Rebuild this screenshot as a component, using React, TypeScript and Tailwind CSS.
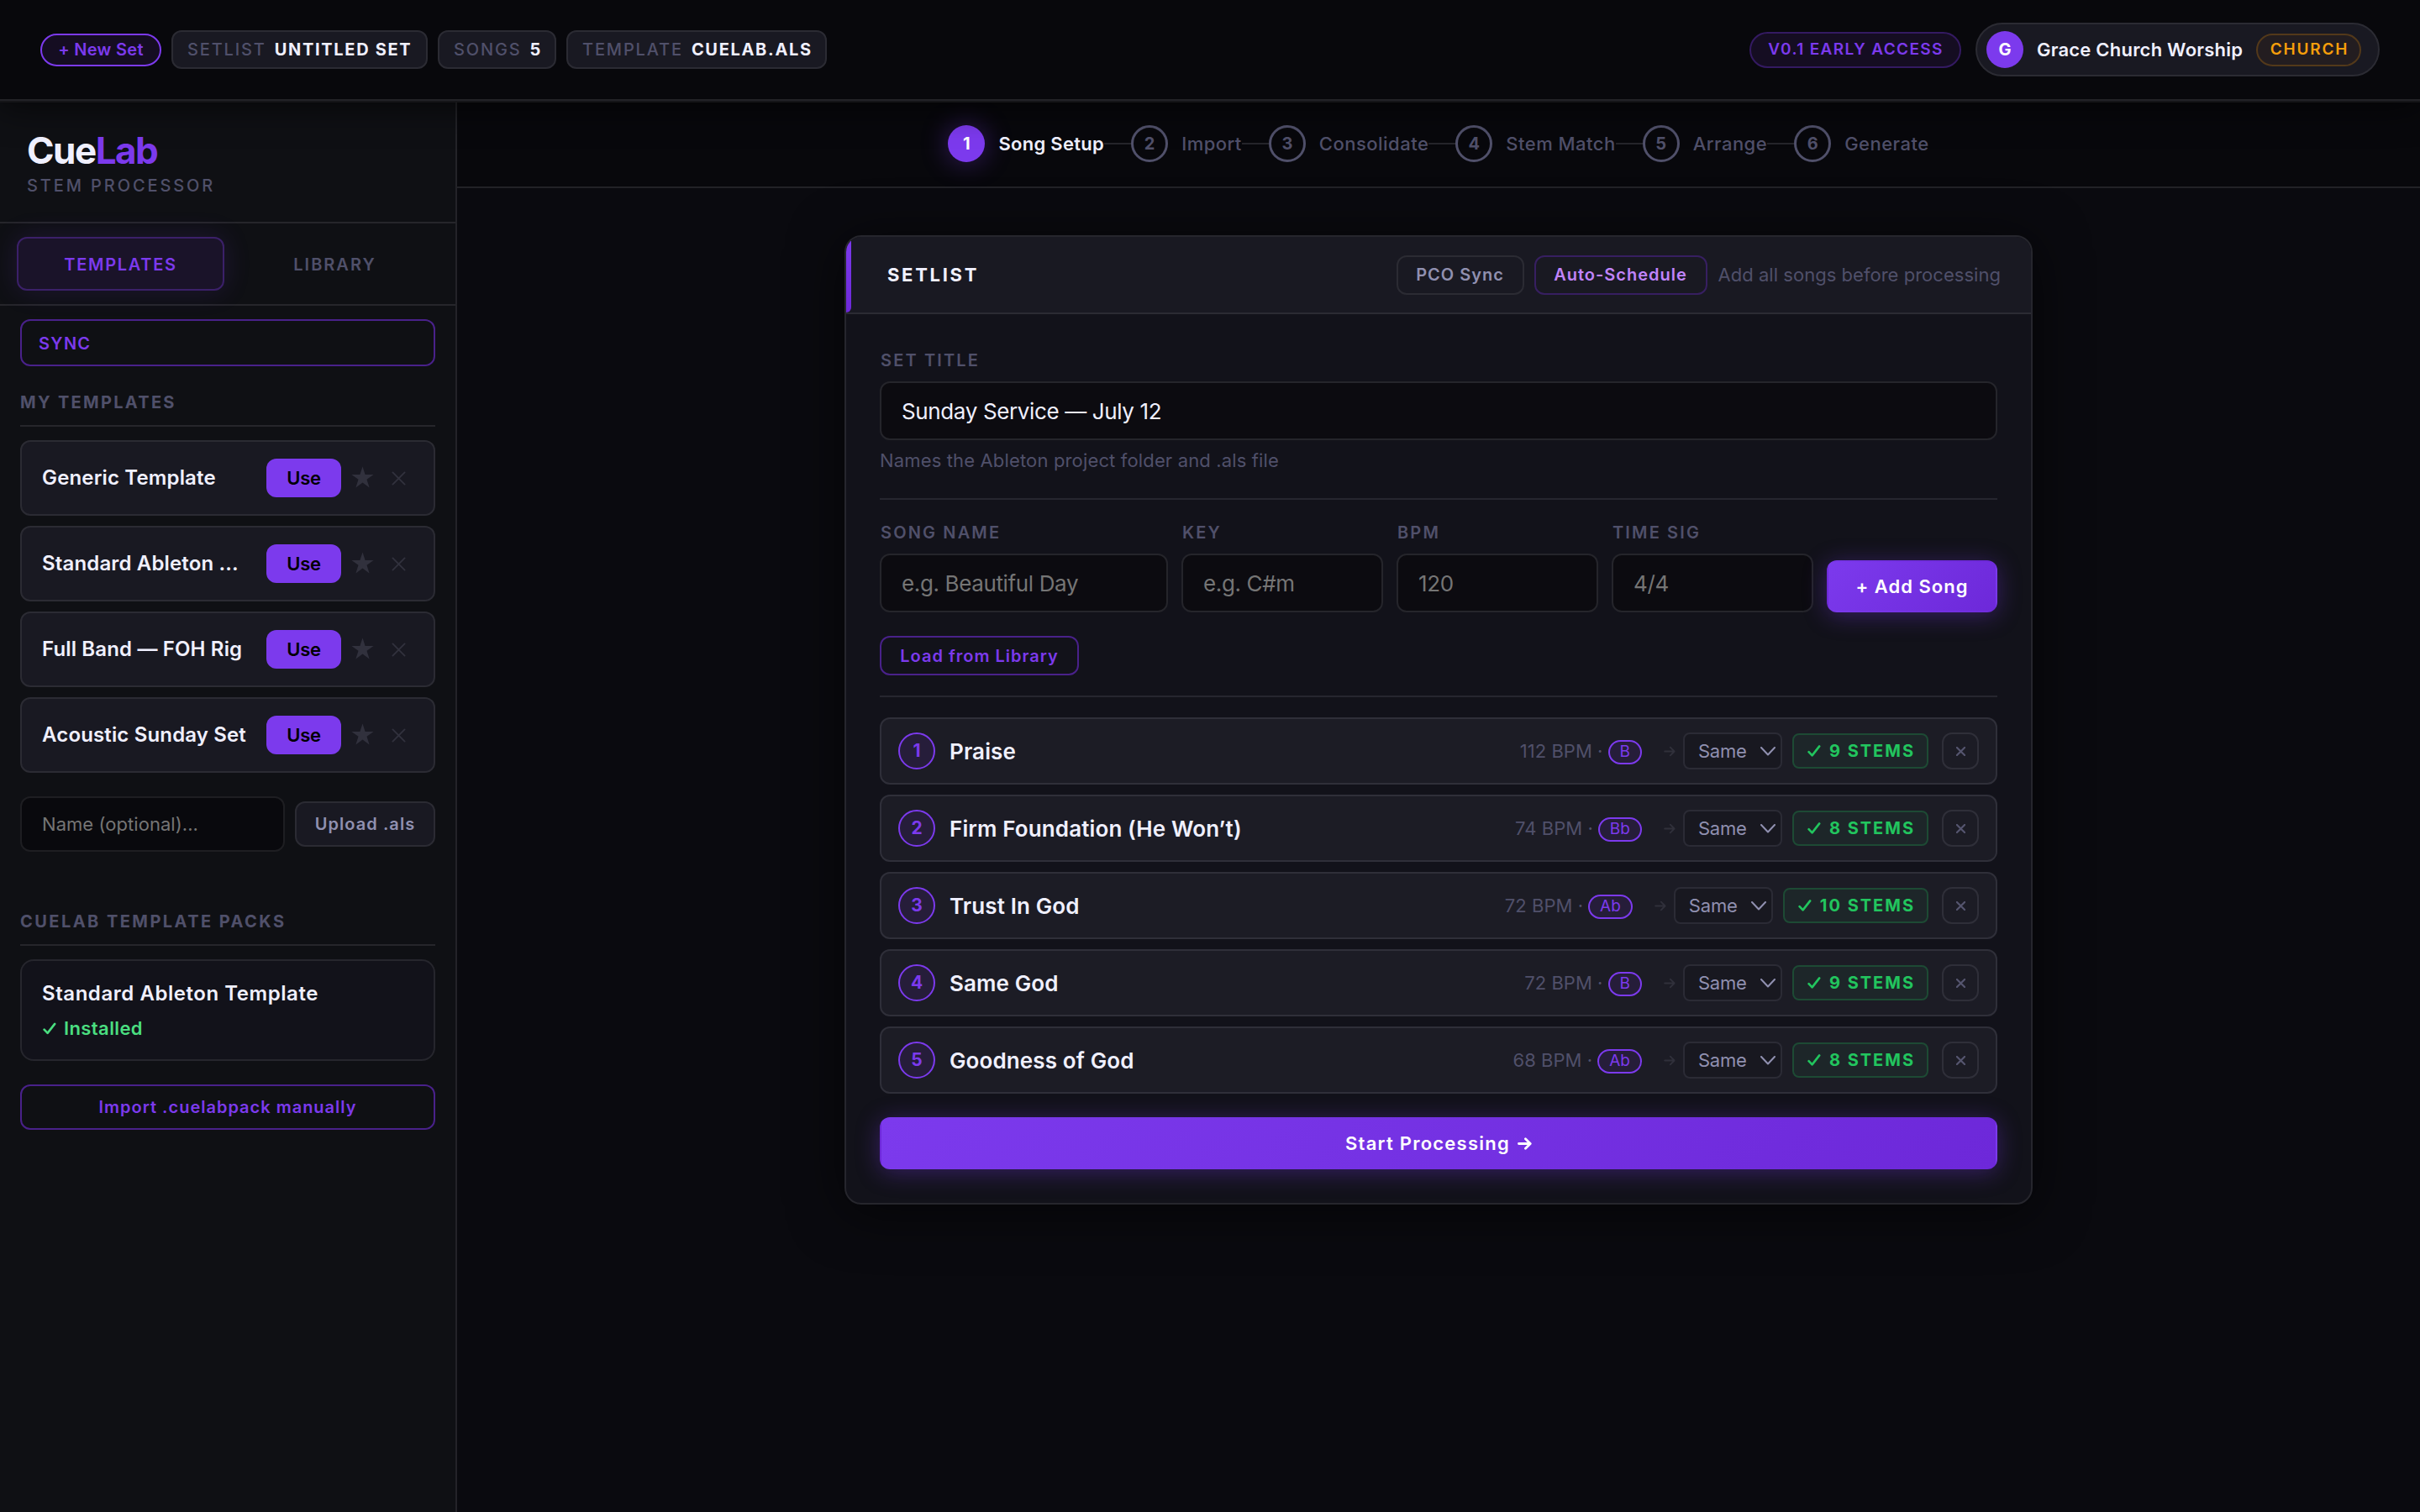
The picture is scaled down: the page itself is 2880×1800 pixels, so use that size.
import { Fragment, ReactNode } from "react";

const templates = ["Generic Template", "Standard Ableton ...", "Full Band — FOH Rig", "Acoustic Sunday Set"];

const steps = ["Song Setup", "Import", "Consolidate", "Stem Match", "Arrange", "Generate"];

const songs = [
  { title: "Praise", bpm: 112, songKey: "B", stems: 9 },
  { title: "Firm Foundation (He Won’t)", bpm: 74, songKey: "Bb", stems: 8 },
  { title: "Trust In God", bpm: 72, songKey: "Ab", stems: 10 },
  { title: "Same God", bpm: 72, songKey: "B", stems: 9 },
  { title: "Goodness of God", bpm: 68, songKey: "Ab", stems: 8 },
];

const inputClasses =
  "w-full h-[70px] rounded-xl border-2 border-[#25252b] bg-[#0c0b10] px-6 text-[26px] tracking-[-0.37px] text-[#f0f0ff] placeholder-[#757575] outline-none";

const labelClasses = "block pl-px text-[20px] leading-[28px] font-semibold tracking-[2.15px] text-[#50506a]";

const primaryClasses =
  "flex items-center justify-center h-[62px] rounded-xl border-2 border-transparent bg-linear-135 from-[#7c3aed] to-[#6d28d9] text-[22px] font-semibold text-white shadow-[0_4px_28px_rgba(124,58,237,0.35)]";

function Check({ className }: { className?: string }) {
  return (
    <svg viewBox="0 0 16 14" className={className} fill="none" stroke="currentColor" strokeWidth="2.6" strokeLinecap="round" strokeLinejoin="round">
      <path d="M1.6 8.2 5.6 12.4 14.2 1.4" />
    </svg>
  );
}

function Cross({ className, width }: { className?: string; width: number }) {
  return (
    <svg viewBox="0 0 18 18" className={className} fill="none" stroke="currentColor" strokeWidth={width} strokeLinecap="round">
      <path d="M1.5 1.5 16.5 16.5M16.5 1.5 1.5 16.5" />
    </svg>
  );
}

function Arrow({ className, width }: { className?: string; width: number }) {
  return (
    <svg viewBox="0 0 18 16" className={className} fill="none" stroke="currentColor" strokeWidth={width} strokeLinecap="round" strokeLinejoin="round">
      <path d="M1.5 8H16M10 1.8 16.2 8 10 14.2" />
    </svg>
  );
}

function Stat({ label, value, className }: { label: string; value: string; className: string }) {
  return (
    <div className={`flex h-[46px] items-center gap-[10px] rounded-xl border-2 border-[#2b2b33] bg-[#191922] pl-[17px] text-[20px] whitespace-nowrap ${className}`}>
      <span className="font-medium tracking-[1.85px] text-[#50506a]">{label}</span>
      <span className="font-bold tracking-[1.68px] text-[#f0f0ff]">{value}</span>
    </div>
  );
}

function Header() {
  return (
    <header className="relative z-10 flex h-[120px] shrink-0 items-center justify-between border-b-2 border-[#222227] bg-[#08080c] px-12 shadow-[0_2px_0_#151518,0_8px_40px_rgba(0,0,0,0.6)]">
      <div className="flex items-center gap-3">
        <button className="h-[39px] w-[144px] rounded-full border-2 border-[#7c3aed] bg-[#150d22] text-[20px] font-semibold tracking-[0.3px] text-[#7c3aed]">
          + New Set
        </button>
        <Stat label="SETLIST" value="UNTITLED SET" className="w-[305px]" />
        <Stat label="SONGS" value="5" className="w-[141px]" />
        <Stat label="TEMPLATE" value="CUELAB.ALS" className="w-[310px]" />
      </div>
      <div className="flex items-center gap-[17px]">
        <span className="flex h-[43px] w-[252px] items-center justify-center rounded-full border-2 border-[#341a62] bg-[#150d22] pl-px text-[19px] font-semibold tracking-[1.35px] text-[#7c3aed]">
          V0.1 EARLY ACCESS
        </span>
        <div className="flex h-16 w-[481px] items-center rounded-full border-2 border-[#2b2b33] bg-[#191922] pr-5 pl-[11px]">
          <span className="flex h-11 w-11 items-center justify-center rounded-full bg-[#7c3aed] text-[20px] font-bold text-white">G</span>
          <span className="ml-[16px] flex-1 text-[22px] font-semibold tracking-[0.22px] whitespace-nowrap text-[#f0f0ff]">Grace Church Worship</span>
          <span className="flex h-[39px] w-[125px] items-center justify-center rounded-full border-2 border-[#53391a] bg-[#231d20] pl-[2px] text-[19px] font-semibold tracking-[1.8px] text-[#f59e0b]">
            CHURCH
          </span>
        </div>
      </div>
    </header>
  );
}

function SectionTitle({ children, className }: { children: ReactNode; className: string }) {
  return (
    <h2 className={`border-b-2 border-[#26262b] pb-3 text-[20px] leading-[30px] font-bold text-[#50506a] ${className}`}>{children}</h2>
  );
}

function Sidebar() {
  return (
    <aside className="flex w-[544px] shrink-0 flex-col border-r-2 border-[#232328] bg-[#0f1014]">
      <div className="h-[146px] border-b-2 border-[#26262b] pt-[33px] pl-8">
        <h1 className="text-[44px] leading-[52px] font-bold tracking-[-1.5px] text-[#f0f0ff]">
          Cue<span className="text-[#7c3aed]">Lab</span>
        </h1>
        <p className="mt-px text-[20px] leading-[30px] font-medium tracking-[2.9px] text-[#50506a]">STEM PROCESSOR</p>
      </div>

      <div className="flex h-[98px] gap-2 border-b-2 border-[#26262b] px-5 py-4 text-[20px] font-semibold">
        <button className="flex-1 rounded-xl border-2 border-[#3b2069] bg-[#1a1329] pt-[2px] tracking-[1.7px] text-[#7c3aed] shadow-[0_0_32px_rgba(124,58,237,0.15)]">
          TEMPLATES
        </button>
        <button className="flex-1 border-2 border-transparent pt-[2px] tracking-[2px] text-[#50506a]">LIBRARY</button>
      </div>

      <div className="flex flex-col px-6 pt-4">
        <button className="h-14 rounded-xl border-2 border-[#49218a] pt-[2px] pl-5 text-left text-[20px] font-semibold tracking-[1.3px] text-[#7c3aed]">
          SYNC
        </button>

        <SectionTitle className="mt-7 tracking-[2.3px]">MY TEMPLATES</SectionTitle>
        <ul className="mt-4 flex flex-col gap-3">
          {templates.map((name) => (
            <li key={name} className="flex h-[90px] items-center rounded-xl border-2 border-[#2b2b33] bg-[#191922] pr-[33px] pl-6">
              <span className="flex-1 text-[24px] font-semibold tracking-[0.15px] whitespace-nowrap text-[#f0f0ff]">{name}</span>
              <button className="h-[46px] w-[89px] rounded-xl bg-[#7c3aed] text-[22px] font-semibold tracking-[-0.3px] text-black">Use</button>
              <svg viewBox="0 0 27 26" className="ml-3 h-[26px] w-[27px] -translate-y-px fill-[#31313d]">
                <path d="M13.5.4 16.6 10H26.6L18.5 15.8 21.6 25.4 13.5 19.5 5.4 25.4 8.5 15.8.4 10H10.4Z" />
              </svg>
              <Cross className="ml-[21px] h-[17px] w-[17px] text-[#31313d]" width={2} />
            </li>
          ))}
        </ul>

        <div className="mt-7 flex items-center gap-3">
          <input
            placeholder="Name (optional)..."
            className="h-[66px] w-[315px] rounded-xl border-2 border-[#1e1e22] bg-[#09090d] pl-6 text-[22px] tracking-[0.05px] placeholder-[#757575] outline-none"
          />
          <button className="h-[54px] flex-1 rounded-xl border-2 border-[#2b2b33] bg-[#191922] text-[20px] font-semibold tracking-[1.05px] whitespace-nowrap text-[#9090b0]">
            Upload .als
          </button>
        </div>

        <SectionTitle className="mt-[68px] tracking-[2.45px]">CUELAB TEMPLATE PACKS</SectionTitle>
        <div className="mt-4 h-[121px] rounded-2xl border-2 border-[#26262d] bg-[#12121a] pt-[24px] pl-6">
          <p className="text-[24px] leading-[30px] font-semibold tracking-[0.55px] text-[#f0f0ff]">Standard Ableton Template</p>
          <p className="mt-[11px] flex items-center gap-[9px] text-[22px] leading-[30px] font-semibold tracking-[0.4px] text-[#4ade80]">
            <Check className="ml-px h-[15px] w-[16px]" /> Installed
          </p>
        </div>
        <button className="mt-7 h-[54px] rounded-xl border-2 border-[#49218a] text-[20px] font-semibold tracking-[1px] text-[#7c3aed]">
          Import .cuelabpack manually
        </button>
      </div>
    </aside>
  );
}

function Stepper() {
  return (
    <nav className="flex h-[104px] shrink-0 items-center justify-center border-b-2 border-[#222227] bg-[#08080c]">
      {steps.map((step, i) => (
        <Fragment key={step}>
          {i > 0 && <span className="h-[2px] w-8 bg-[#25252b]" />}
          <span
            className={
              i === 0
                ? "flex h-11 w-11 items-center justify-center rounded-full bg-[#7c3aed] text-[20px] font-bold text-white shadow-[0_0_32px_rgba(124,58,237,0.4)]"
                : "flex h-11 w-11 items-center justify-center rounded-full border-3 border-[#50506a] text-[20px] font-bold text-[#50506a]"
            }
          >
            {i + 1}
          </span>
          <span className={`ml-4 text-[22px] ${i === 0 ? "font-semibold tracking-[0.3px] text-[#f0f0ff]" : "font-medium tracking-[0.48px] text-[#50506a]"}`}>
            {step}
          </span>
        </Fragment>
      ))}
    </nav>
  );
}

function SongRow({ song, index }: { song: (typeof songs)[number]; index: number }) {
  return (
    <li className="flex h-20 items-center rounded-xl border-2 border-[#2f2f39] bg-[#1c1c25] px-5">
      <span className="flex h-11 w-11 items-center justify-center rounded-full border-2 border-[#7c3aed] bg-[#261d3a] text-[21px] font-bold text-[#7c3aed]">
        {index}
      </span>
      <span className="ml-[17px] flex-1 text-[26px] font-semibold tracking-[0.12px] text-[#f0f0ff]">{song.title}</span>
      <span className="text-[22px] tracking-[0.05px] text-[#50506a]">{song.bpm} BPM ·</span>
      <span className="ml-[6px] flex h-[29px] translate-y-px items-center rounded-full border-2 border-[#7c3aed] bg-[#261d3a] px-3 text-[19px] text-[#7c3aed]">
        {song.songKey}
      </span>
      <Arrow className="ml-[26px] h-[13px] w-[14px] text-[#30303b]" width={2.4} />
      <div className="ml-[9px] flex h-11 w-[118px] items-center justify-between rounded-lg border-2 border-[#2b2b35] bg-[#181820] pr-[6px] pl-4 text-[22px] tracking-[-0.2px] text-[#9090b0]">
        Same
        <svg viewBox="0 0 18 11" className="h-[11px] w-[18px]" fill="none" stroke="currentColor" strokeWidth="2" strokeLinecap="round" strokeLinejoin="round">
          <path d="M1 1 9 9.5 17 1" />
        </svg>
      </div>
      <span className="ml-3 flex h-[42px] items-center gap-[10px] rounded-lg border-2 border-[#1d4a34] bg-[#1d2629] pr-[14px] pl-4 text-[20px] font-bold tracking-[2px] whitespace-nowrap text-[#22c55e]">
        <Check className="h-[14px] w-[16px]" />
        {song.stems} STEMS
      </span>
      <button className="ml-4 flex h-11 w-11 items-center justify-center rounded-xl border-2 border-[#2f2f39]">
        <Cross className="h-[11px] w-[11px] text-[#55556f]" width={3.6} />
      </button>
    </li>
  );
}

function Field({ label, placeholder }: { label: string; placeholder: string }) {
  return (
    <div>
      <label className={labelClasses}>{label}</label>
      <input placeholder={placeholder} className={`${inputClasses} mt-[11px]`} />
    </div>
  );
}

function SetlistCard() {
  return (
    <section className="w-[1414px] overflow-hidden rounded-[20px] border-2 border-[#26262d] bg-[#12121a] shadow-[0_8px_64px_rgba(0,0,0,0.6)]">
      <div className="relative flex h-[92px] items-center border-b-2 border-[#2b2b33] bg-[#191922] pr-9 pl-[49px]">
        <span className="absolute top-0 left-0 h-full w-[6px] rounded-br-md bg-linear-to-b from-[#7c3aed] to-[#6d28d9]" />
        <h2 className="flex-1 pt-px text-[22px] font-bold tracking-[2.7px] text-[#f0f0ff]">SETLIST</h2>
        <button className="h-[47px] w-[152px] rounded-xl border-2 border-[#2b2b33] text-[20px] font-semibold tracking-[1px] text-[#9090b0]">PCO Sync</button>
        <button className="ml-3 h-[47px] w-[206px] rounded-xl border-2 border-[#371f61] text-[20px] font-semibold tracking-[1px] text-[#c084fc]">
          Auto-Schedule
        </button>
        <span className="ml-[13px] text-[22px] tracking-[0.03px] text-[#50506a]">Add all songs before processing</span>
      </div>

      <div className="px-10 pt-[41px] pb-10">
        <label className={labelClasses}>SET TITLE</label>
        <input defaultValue="Sunday Service — July 12" className={`${inputClasses} mt-[11px]`} />
        <p className="mt-[9px] text-[22px] leading-[30px] tracking-[0.15px] text-[#50506a]">Names the Ableton project folder and .als file</p>

        <div className="mt-[30px] grid grid-cols-[343px_240px_240px_240px_1fr] items-end gap-4 border-t-2 border-[#26262f] pt-[25px]">
          <Field label="SONG NAME" placeholder="e.g. Beautiful Day" />
          <Field label="KEY" placeholder="e.g. C#m" />
          <Field label="BPM" placeholder="120" />
          <Field label="TIME SIG" placeholder="4/4" />
          <button className={`${primaryClasses} tracking-[1px]`}>+ Add Song</button>
        </div>
        <button className="mt-7 block h-[47px] w-[237px] rounded-xl border-2 border-[#49218a] text-[20px] font-semibold tracking-[1px] text-[#7c3aed]">
          Load from Library
        </button>

        <ul className="mt-6 flex flex-col gap-3 border-t-2 border-[#26262f] pt-6">
          {songs.map((song, i) => (
            <SongRow key={song.title} song={song} index={i + 1} />
          ))}
        </ul>

        <button className={`${primaryClasses} mt-7 w-full gap-[9px] tracking-[1.25px]`}>
          Start Processing
          <Arrow className="h-[15px] w-[17px]" width={3} />
        </button>
      </div>
    </section>
  );
}

export default function App() {
  return (
    <div className="flex h-[1800px] w-[2880px] flex-col overflow-hidden bg-[#0a0a0f] font-['Inter',sans-serif] antialiased">
      <Header />
      <div className="flex flex-1">
        <Sidebar />
        <main className="flex flex-1 flex-col">
          <Stepper />
          <div className="flex justify-center pt-14">
            <SetlistCard />
          </div>
        </main>
      </div>
    </div>
  );
}
